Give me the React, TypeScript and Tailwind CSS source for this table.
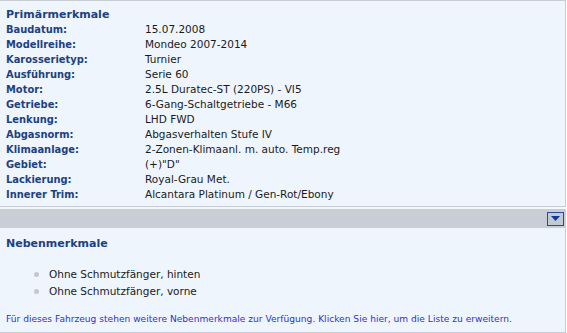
const rows: [string, string][] = [
  ["Baudatum:", "15.07.2008"],
  ["Modellreihe:", "Mondeo 2007-2014"],
  ["Karosserietyp:", "Turnier"],
  ["Ausführung:", "Serie 60"],
  ["Motor:", "2.5L Duratec-ST (220PS) - VI5"],
  ["Getriebe:", "6-Gang-Schaltgetriebe - M66"],
  ["Lenkung:", "LHD FWD"],
  ["Abgasnorm:", "Abgasverhalten Stufe IV"],
  ["Klimaanlage:", "2-Zonen-Klimaanl. m. auto. Temp.reg"],
  ["Gebiet:", "(+)\"D\""],
  ["Lackierung:", "Royal-Grau Met."],
  ["Innerer Trim:", "Alcantara Platinum / Gen-Rot/Ebony"],
];

const extras = ["Ohne Schmutzfänger, hinten", "Ohne Schmutzfänger, vorne"];

const App = () => {
  return (
    <div className="w-[567px] h-[333px] bg-white font-['DejaVu_Sans',Verdana,sans-serif] text-[10.5px] overflow-hidden">
      <div className="w-[566px] border-t border-r border-[#c8ccd4] bg-[#eef5fd] pt-[6px] pb-[4px] pl-[6px]">
        <p className="font-bold text-[11px] text-[#1d4180] leading-[15px]">Primärmerkmale</p>
        {rows.map(([k, v]) => (
          <div key={k} className="flex leading-[15px]">
            <span className="w-[139px] font-bold text-[11px] text-[#1d4180] font-['DejaVu_Sans_Condensed',Verdana,sans-serif]">{k}</span>
            <span className="text-[#1a1a1a]">{v}</span>
          </div>
        ))}
      </div>
      <div className="w-[566px] h-[3px] bg-[#f4f6f9] border-t border-[#c8ccd4]" />
      <div className="w-[566px] h-[19px] bg-[#c9cdd6] flex justify-end items-center pr-[2px]">
        <button className="w-[17px] h-[14px] border border-[#2b4a9a] bg-[#c2cad8] flex items-center justify-center">
          <svg width="9" height="5" viewBox="0 0 9 5">
            <path d="M0 0h9L4.5 5z" fill="#14399a" />
          </svg>
        </button>
      </div>
      <div className="w-[566px] h-[105px] border-r border-b border-[#c8ccd4] bg-[#eef5fd] pl-[6px] pt-[8px]">
        <p className="font-bold text-[11px] text-[#1d4180] leading-[15px]">Nebenmerkmale</p>
        <ul className="mt-[15px] pl-[28px]">
          {extras.map((e) => (
            <li key={e} className="flex items-center leading-[17px] text-[#1a1a1a]">
              <span className="w-[5px] h-[5px] rounded-full bg-[#c4c8cc] mr-[10px]" />
              {e}
            </li>
          ))}
        </ul>
        <p className="mt-[13px] text-[9.1px] text-[#3232c8] leading-[13px]">
          Für dieses Fahrzeug stehen weitere Nebenmerkmale zur Verfügung. Klicken Sie hier, um die Liste zu erweitern.
        </p>
      </div>
    </div>
  );
};

export default App;
